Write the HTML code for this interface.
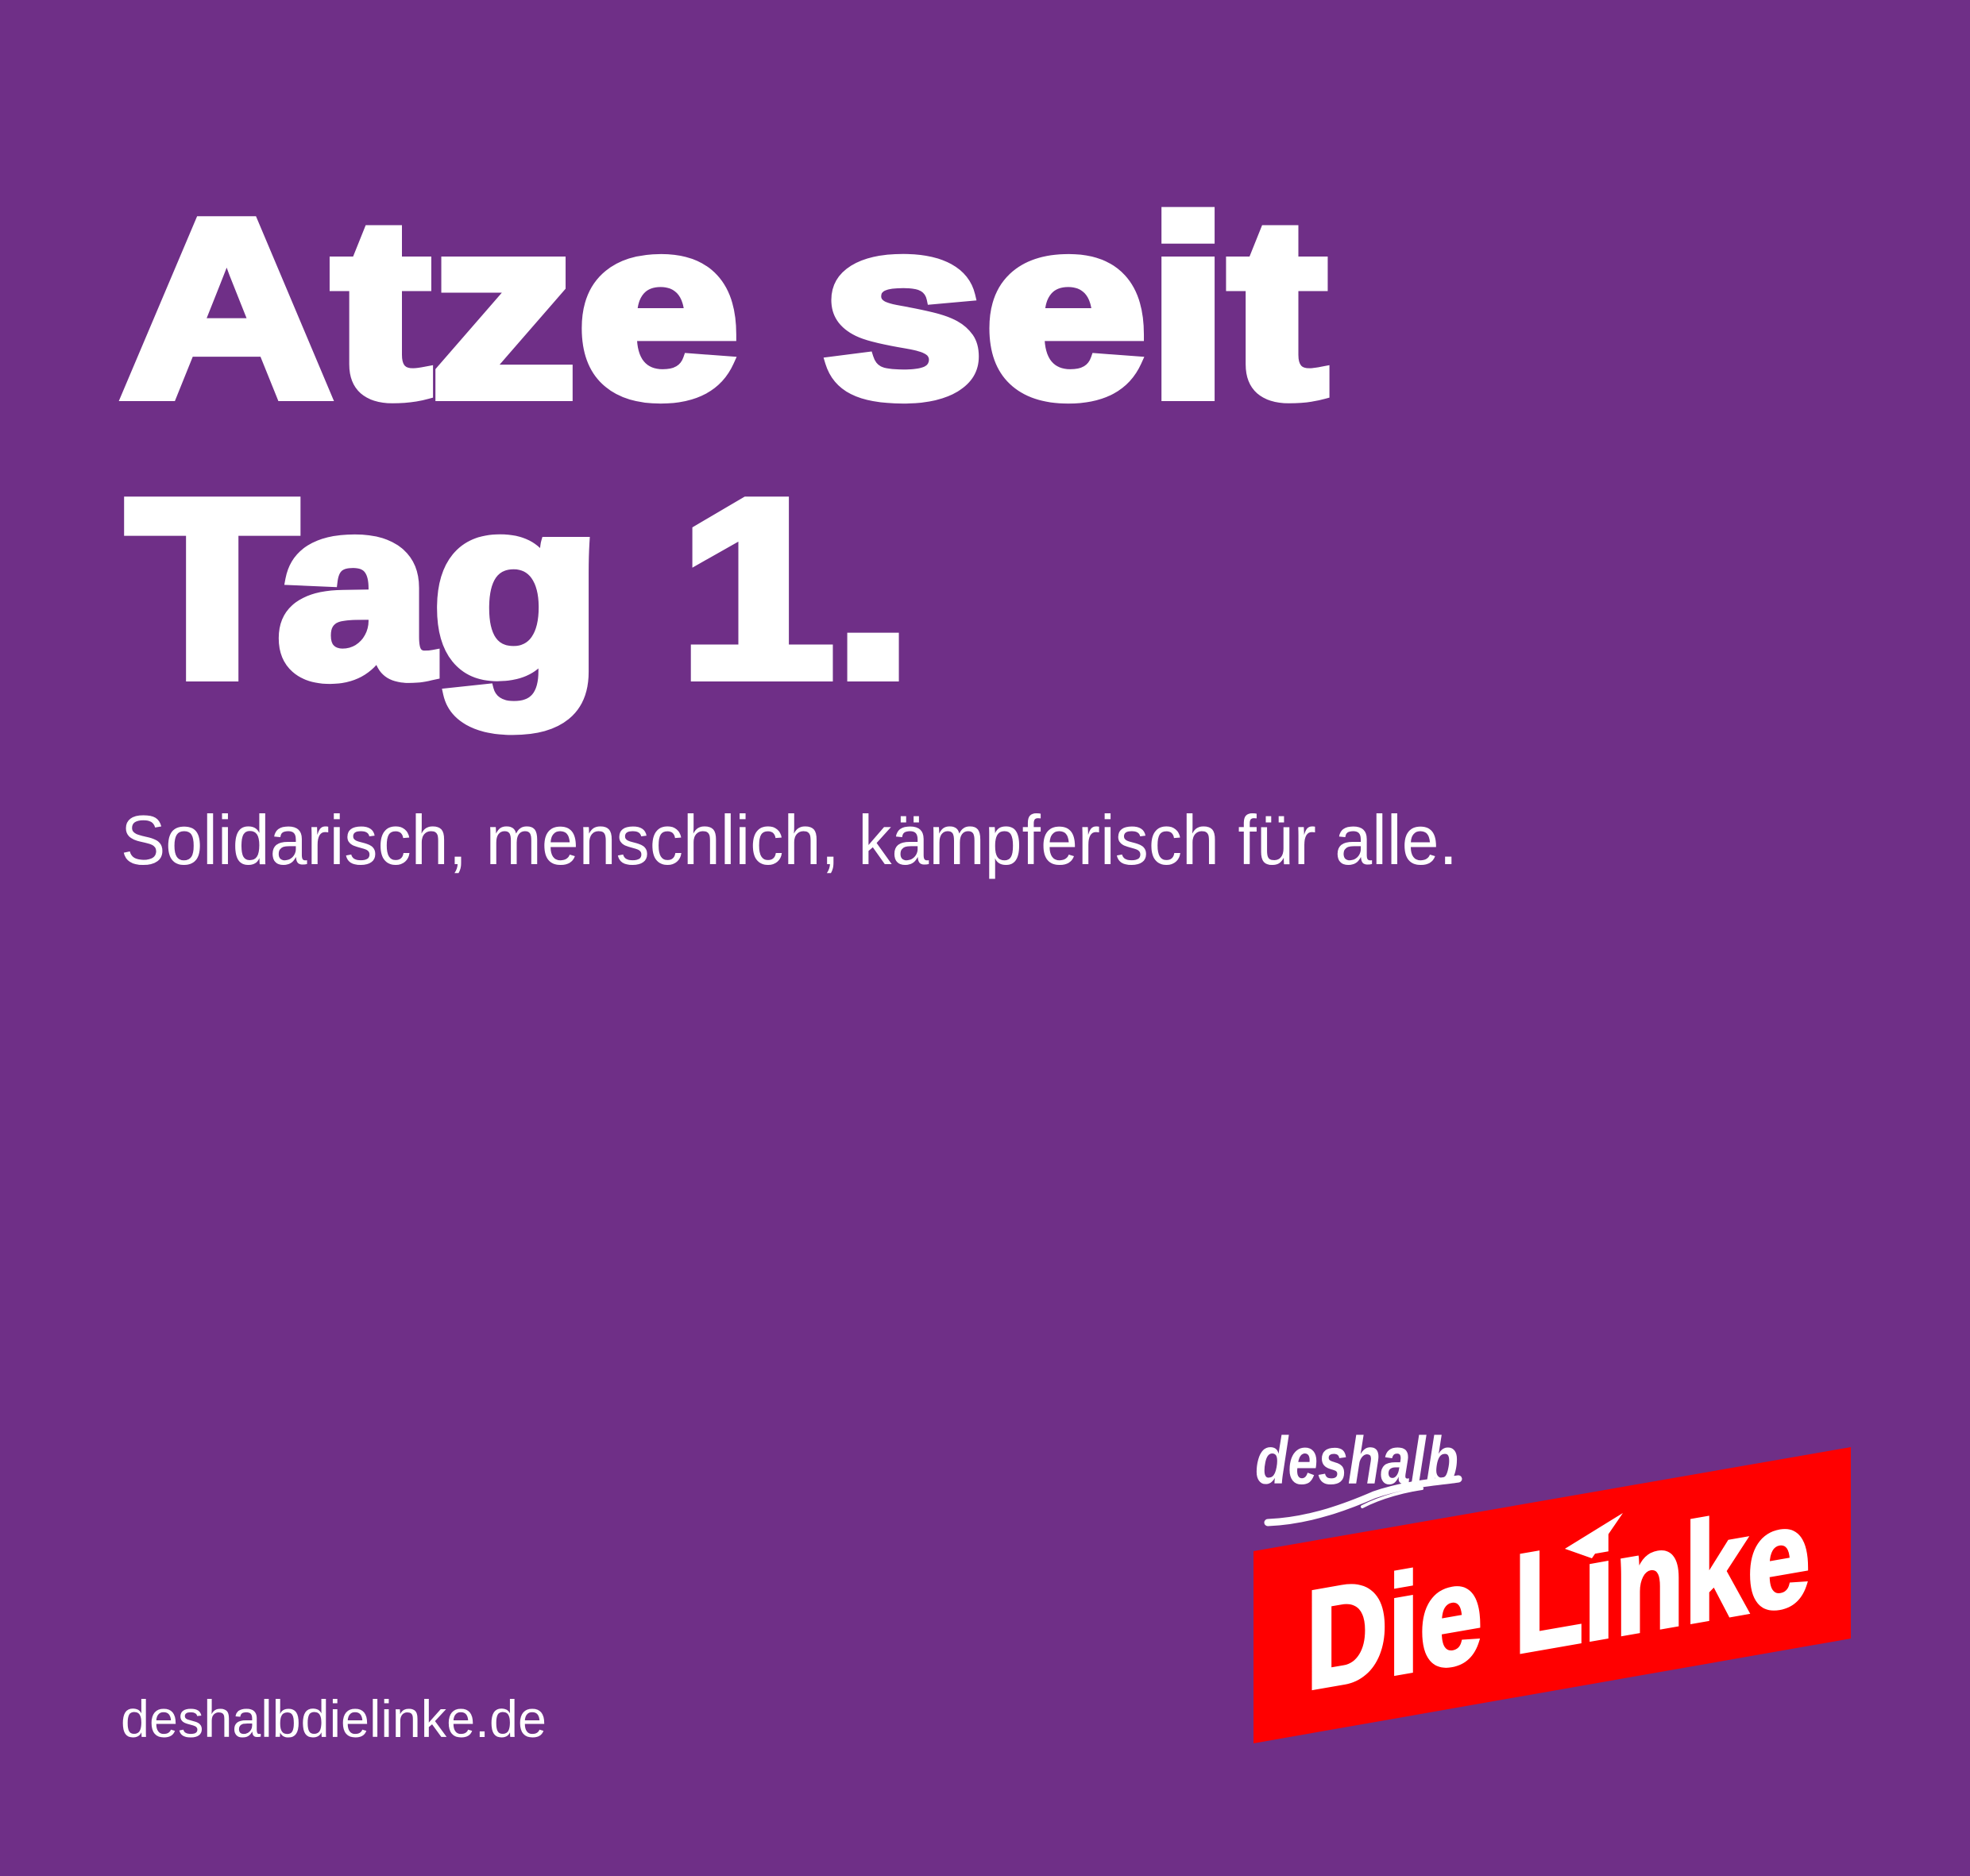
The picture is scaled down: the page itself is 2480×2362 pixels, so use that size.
<!DOCTYPE html>
<html><head><meta charset="utf-8"><style>
html,body{margin:0;padding:0;background:#6f2f87;}
svg{display:block}
</style></head><body>
<svg width="2480" height="2362" viewBox="0 0 2480 2362" xmlns="http://www.w3.org/2000/svg">
<rect width="2480" height="2362" fill="#6f2f87"/>
<g font-family="Liberation Sans, sans-serif" fill="#fff">
<text x="152" y="498" font-size="318" font-weight="bold" stroke="#fff" stroke-width="14" stroke-linejoin="miter" textLength="1518" lengthAdjust="spacingAndGlyphs">Atze seit</text>
<text x="160" y="851" font-size="318" font-weight="bold" stroke="#fff" stroke-width="14" stroke-linejoin="miter" textLength="988" lengthAdjust="spacingAndGlyphs">Tag 1.</text>
<text x="152" y="1088" font-size="88" textLength="1683" lengthAdjust="spacingAndGlyphs">Solidarisch, menschlich, kämpferisch für alle.</text>
<text x="152" y="2187" font-size="66" textLength="536" lengthAdjust="spacingAndGlyphs">deshalbdielinke.de</text>
</g>
<polygon points="1578,1953 2330,1822 2330,2063 1578,2195" fill="#ff0000"/>
<g transform="translate(1644,2127) skewY(-9.9)">
<text x="0" y="0" font-family="Liberation Sans, sans-serif" font-weight="bold" font-size="176" fill="#fff" stroke="#fff" stroke-width="5" textLength="635" lengthAdjust="spacingAndGlyphs">Die Linke</text>
</g>
<polygon points="1970,1950 2043,1905 2004,1962" fill="#fff"/>
<g font-family="Liberation Sans, sans-serif">
<text x="1580" y="1868" font-size="84" font-style="italic" font-weight="bold" fill="#fff" textLength="256" lengthAdjust="spacingAndGlyphs">deshalb</text>
</g>
<path d="M1596,1917 C1650,1915 1700,1895 1730,1882 C1770,1868 1810,1866 1836,1862" stroke="#fff" stroke-width="9" fill="none" stroke-linecap="round"/>
<path d="M1715,1897 C1740,1884 1770,1877 1790,1874" stroke="#fff" stroke-width="4" fill="none" stroke-linecap="round"/>
</svg>
</body></html>
